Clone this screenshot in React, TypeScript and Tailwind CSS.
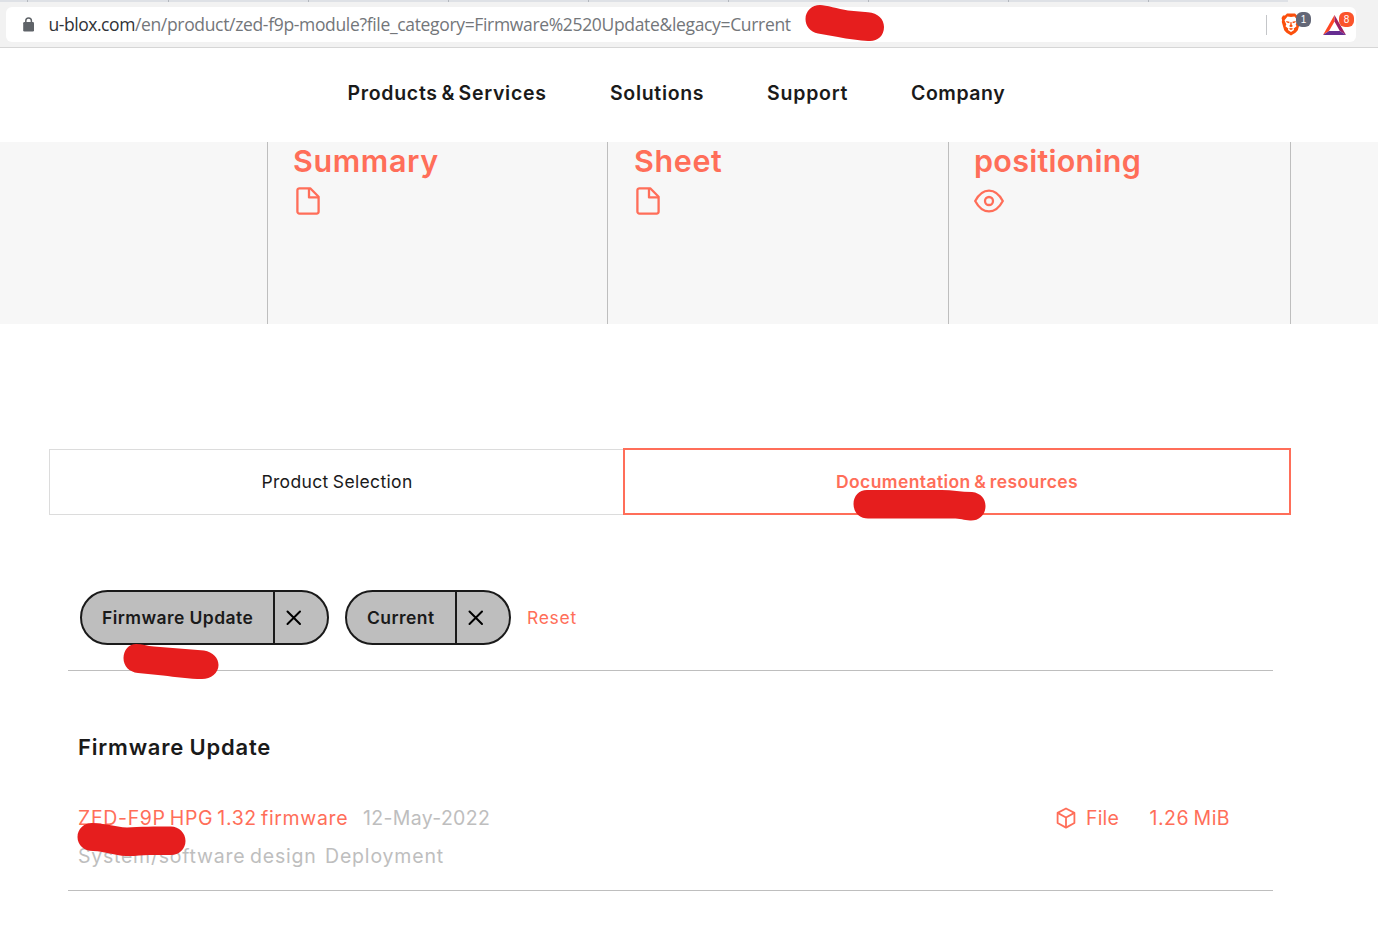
import type { ReactNode } from "react";

function FileIcon() {
  return (
    <svg width="24" height="28" viewBox="0 0 24 28" fill="none" stroke="#ff6e59" strokeWidth="2.3" strokeLinejoin="round">
      <path d="M3.2 1.3H14.2L22.6 9.8V24.6a2 2 0 0 1-2 2H3.4a2 2 0 0 1-2-2V3.3a2 2 0 0 1 2-2Z" />
      <path d="M13 1.4V10.4H22.4" />
    </svg>
  );
}

function EyeIcon() {
  return (
    <svg width="30" height="24" viewBox="0 0 30 24" fill="none" stroke="#ff6e59" strokeWidth="2.3">
      <path d="M1.2 12C5 4.8 9.5 1.6 15 1.6S25 4.8 28.8 12C25 19.2 20.5 22.4 15 22.4S5 19.2 1.2 12Z" strokeLinejoin="round" />
      <circle cx="15" cy="12" r="4" />
    </svg>
  );
}

function CubeIcon() {
  return (
    <svg width="20" height="22" viewBox="0 0 20 22" fill="none" stroke="#ff6e59" strokeWidth="1.8" strokeLinejoin="round">
      <path d="M10 1.5L18.4 5.9V16L10 20.6L1.6 16V5.9Z" />
      <path d="M1.6 5.9L10 10.5L18.4 5.9M10 10.5V20.6" />
    </svg>
  );
}

function CloseIcon() {
  return (
    <svg width="16" height="16" viewBox="0 0 16 16" stroke="#000" strokeWidth="2" strokeLinecap="round">
      <path d="M1.5 1.5L14 14M14 1.5L1.5 14" />
    </svg>
  );
}

function LockIcon() {
  return (
    <svg width="12" height="15" viewBox="0 0 12 15">
      <rect x="0.2" y="5" width="10.8" height="9.5" rx="1.3" fill="#5f6368" />
      <path d="M2.8 5.5V3.7a2.8 2.8 0 0 1 5.6 0V5.5" fill="none" stroke="#5f6368" strokeWidth="1.5" />
    </svg>
  );
}

function BraveIcon() {
  return (
    <svg width="20" height="23" viewBox="0 0 20 23">
      <path d="M6 0.5H14L16 2.5L18 2.4L19.5 5L18.9 7L19.2 9L16.8 17.3L14.5 19.7L10 22.5L5.5 19.7L3.2 17.3L0.8 9L1.1 7L0.5 5L2 2.4L4 2.5Z" fill="#fb4f0c" />
      <path d="M6.5 3.5L10 4.1L13.5 3.5L16.5 7.2L14.7 11.5L15.5 13.2L12.8 15.6L13 17L10 19L7 17L7.2 15.6L4.5 13.2L5.3 11.5L3.5 7.2Z" fill="#fff" />
      <path d="M5 8L8.6 8.8L8.2 10.2L5.8 9.4ZM15 8L11.4 8.8L11.8 10.2L14.2 9.4ZM9.5 9H10.5L10.8 12L12 13L10 14.3L8 13L9.2 12ZM7.6 15.8L10 14.9L12.4 15.8L10 17Z" fill="#fb4f0c" />
    </svg>
  );
}

function TriangleIcon() {
  return (
    <svg width="23" height="20" viewBox="0 0 23 20">
      <path d="M11.5 0L0 20L6 16L11.5 6.5Z" fill="#ff4724" />
      <path d="M11.5 0L23 20L16.8 16L11.5 6.5Z" fill="#9e1f63" />
      <path d="M0 20H23L16.8 16H6Z" fill="#662d91" />
    </svg>
  );
}

function Scribble({ className, d, viewBox }: { className: string; d: string; viewBox: string }) {
  return (
    <svg className={`absolute ${className}`} viewBox={viewBox}>
      <path d={d} fill="#e61e1e" />
    </svg>
  );
}

const tabWidths = ["w-7", "w-[141px]", "w-[140px]", "w-[140px]", "w-[140px]", "w-[140px]", "w-[140px]", "w-[140px]", "w-[140px]"];

function BrowserBar() {
  return (
    <div className="h-12 border-b border-[#d6d6d6] bg-[#f2f2f2]">
      <div className="flex h-0.5 w-[1288px] bg-[#dee1e6]">
        {tabWidths.map((w, i) => (
          <span key={i} className={`${w} shrink-0 border-r border-[#b4b8be]`} />
        ))}
      </div>
      <div className="mt-[5px] ml-1.5 flex h-[35px] w-[1350px] items-center rounded-md bg-white pl-[17px]">
        <LockIcon />
        <div className="ml-[13.5px] whitespace-nowrap font-['Open_Sans',sans-serif] text-[17.5px] tracking-[-0.335px] text-[#73767a]">
          <span className="tracking-[-0.45px] text-[#303236]">u-blox.com</span>
          /en/product/zed-f9p-module?file_category=Firmware%2520Update&amp;legacy=Current
        </div>
        <div className="ml-auto flex items-center pr-[10px]">
          <span className="h-5 w-px bg-[#c4c6c9]" />
          <div className="relative ml-3.5">
            <BraveIcon />
            <span className="absolute -top-px left-[15px] flex h-[15px] w-[15px] items-center justify-center rounded-[6px] bg-[#636777] font-['Liberation_Sans',sans-serif] text-[10px] text-white">1</span>
          </div>
          <div className="relative ml-[22px]">
            <TriangleIcon />
            <span className="absolute -top-[3px] left-4 flex h-[15px] w-[15px] items-center justify-center rounded-[6px] bg-[#fb542b] font-['Liberation_Sans',sans-serif] text-[10px] text-white">8</span>
          </div>
        </div>
      </div>
    </div>
  );
}

function Card({ title, className, children }: { title: string; className: string; children: ReactNode }) {
  return (
    <div className={`border-l border-[#bebebe] ${className}`}>
      <h2 className="text-[30.5px] leading-[38px] font-semibold">{title}</h2>
      {children}
    </div>
  );
}

function Chip({ label, className }: { label: string; className: string }) {
  return (
    <div className={`flex h-[55px] items-stretch rounded-full border-2 border-[#1a1a1a] bg-[#bebebe] text-[17.5px] font-semibold ${className}`}>
      <span className="flex flex-1 items-center pt-0.5 pl-5 whitespace-nowrap">{label}</span>
      <button className="flex w-[54px] items-center border-l-2 border-[#1a1a1a] pl-[11px]" aria-label="Remove">
        <CloseIcon />
      </button>
    </div>
  );
}

export default function App() {
  return (
    <div className="relative h-[933px] w-[1378px] overflow-hidden bg-white font-['Inter',sans-serif] text-[#1a1a1a]">
      <BrowserBar />
      <nav className="flex h-[94px] items-center pb-[3px] pl-[347.5px] text-[19.5px] font-semibold whitespace-nowrap">
        <a className="w-[262.5px] tracking-[0.7px] [word-spacing:-2px]">Products &amp; Services</a>
        <a className="w-[157px] tracking-[0.68px]">Solutions</a>
        <a className="w-36 tracking-[0.78px]">Support</a>
        <a className="tracking-[0.55px]">Company</a>
      </nav>

      <section className="flex h-[182px] bg-[#f7f7f7] pl-[267px] text-[#ff6e59]">
        <Card title="Summary" className="w-[340px] pl-[25px] tracking-[0.62px]">
          <div className="mt-[7px] ml-[3px]"><FileIcon /></div>
        </Card>
        <Card title="Sheet" className="w-[341px] pl-[26px] tracking-[0.62px]">
          <div className="mt-[7px] ml-0.5"><FileIcon /></div>
        </Card>
        <Card title="positioning" className="w-[343px] border-r pl-[25px] tracking-[0.28px]">
          <div className="mt-[9px]"><EyeIcon /></div>
        </Card>
      </section>

      <div className="mt-[124px] ml-[49px] flex h-[67px] w-[1242px] text-[17.5px]">
        <div className="mt-px flex w-[574px] items-center justify-center border border-r-0 border-[#dcdcdc] pt-px pl-px tracking-[0.34px] [word-spacing:-1px]">Product Selection</div>
        <div className="flex flex-1 items-center justify-center border-2 border-[#ff6e59] pt-0.5 font-semibold tracking-[0.4px] text-[#ff6e59] [word-spacing:-1.2px]">Documentation &amp; resources</div>
      </div>

      <main className="ml-[68px] w-[1205px]">
        <div className="mt-[75px] flex h-[81px] items-start border-b border-[#bebebe] pl-3">
          <Chip label="Firmware Update" className="w-[249px] tracking-[0.42px]" />
          <Chip label="Current" className="ml-4 w-[166px] tracking-[0.44px]" />
          <a className="ml-4 flex h-[55px] items-center pt-0.5 text-[17.5px] tracking-[0.7px] text-[#ff6e59]">Reset</a>
        </div>
        <div className="h-[220px] border-b border-[#bebebe] pt-[60px] pl-2.5">
          <h3 className="text-[22px] leading-8 font-semibold tracking-[0.8px] [word-spacing:-1px]">Firmware Update</h3>
          <div className="mt-10 flex h-8 items-center text-[19.5px] whitespace-nowrap text-[#bebebe]">
            <a className="w-[285px] tracking-[0.65px] text-[#ff6e59] [word-spacing:-2px]">ZED-F9P HPG 1.32 firmware</a>
            <span className="tracking-[0.33px]">12-May-2022</span>
            <div className="ml-auto flex w-[216px] items-center text-[#ff6e59]">
              <div className="-mt-0.5 -ml-px"><CubeIcon /></div>
              <span className="ml-2.5 w-[63.5px] tracking-[0.15px]">File</span>
              <span className="tracking-[0.5px] [word-spacing:-1.5px]">1.26 MiB</span>
            </div>
          </div>
          <div className="mt-1.5 flex h-8 items-center text-[19.5px] whitespace-nowrap text-[#bebebe]">
            <span className="w-[247px] tracking-[0.76px] [word-spacing:-1.5px]">System/software design</span>
            <span className="tracking-[0.83px]">Deployment</span>
          </div>
        </div>
      </main>

      <Scribble className="top-[4px] left-[805px] h-[38px] w-20" viewBox="805 4 80 38" d="M820 5C826 5 838 9 848 10.5L868 12.2C878 13 884 19 884 27C884 36 877 42 868 41C860 40.5 848 39 838 37L818 33.5C810 32 805.5 26 805.5 19C805.5 11 812 5 820 5Z" />
      <Scribble className="top-[489px] left-[853px] h-8 w-[133px]" viewBox="853 489 133 32" d="M867 490H942C952 490 961 492 972 492C981 493 985.5 499 985.5 506C985.5 515 979 521 970 520.5C964 520 960 518.5 953 518.5H868C859 518.5 853.5 512 853.5 504C853.5 496 859 490 867 490Z" />
      <Scribble className="top-[643px] left-[123px] h-[37px] w-24" viewBox="123 643 96 37" d="M136 644C142 644 147 646 154 646.5L204 650.5C213 652 218.5 658 218.5 665C218.5 673 211 679 202 679C190 679 175 677 163 675.5L138 673C129 672 123.5 666 123.5 658C123.5 650 129 644 136 644Z" />
      <Scribble className="top-[822px] left-[77px] h-[35px] w-[109px]" viewBox="77 822 109 35" d="M92 823C104 823 115 827 127 827.5C139 826.5 155 826.5 171 826.5C179 826.5 185.5 833 185.5 841C185.5 849 179 855 171 855H152C143 854.5 135 856.5 126 856C114 855.5 106 851.5 93 851C84 851 77.5 845 77.5 837C77.5 829 84 823 92 823Z" />
    </div>
  );
}
